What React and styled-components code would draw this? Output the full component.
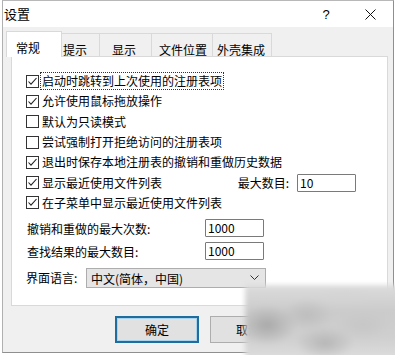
import React from "react";
import styled, { createGlobalStyle } from "styled-components";

const Global = createGlobalStyle`
  html, body { margin: 0; padding: 0; background: #fff; }
  body {
    font-family: "Noto Sans CJK SC", "Noto Sans", sans-serif;
    font-size: 12px;
    color: #000;
  }
`;

const Page = styled.div`
  position: relative;
  width: 395px;
  height: 355px;
  overflow: hidden;
  padding: 0 1px 2px 2px;
  box-sizing: border-box;
  background: #fff;
`;

const Win = styled.div`
  width: 100%;
  height: 100%;
  box-sizing: border-box;
  border: 1px solid #8f8f8f;
  border-top-color: #b8b8b8;
  border-left-color: #b0b0b0;
  background: #f0f0f0;
  display: flex;
  flex-direction: column;
`;

const TitleBar = styled.div`
  height: 26px;
  flex: none;
  background: #fff;
  display: flex;
  align-items: center;
  padding-left: 1px;
  font-size: 13px;
`;

const Title = styled.span`
  flex: 1;
  line-height: 16px;
`;

const Help = styled.span`
  width: 30px;
  text-align: center;
  font-family: "Liberation Sans", sans-serif;
  font-size: 13px;
  margin-right: 7px;
`;

const Close = styled.span`
  width: 45px;
  height: 26px;
  display: flex;
  align-items: center;
  justify-content: center;
`;

const Body = styled.div`
  flex: 1;
  display: flex;
  flex-direction: column;
  padding: 4px 0 0 3px;
`;

const TabRow = styled.div`
  display: flex;
  align-items: flex-end;
  height: 25px;
  position: relative;
  z-index: 1;
`;

const Tab = styled.div`
  box-sizing: border-box;
  width: ${(p) => p.$w}px;
  height: ${(p) => (p.$active ? 26 : 23)}px;
  margin-bottom: ${(p) => (p.$active ? -1 : 0)}px;
  padding-left: ${(p) => p.$pad}px;
  padding-top: 8px;
  line-height: 16px;
  background: ${(p) => (p.$active ? "#fff" : "#f0f0f0")};
  border: 1px solid #d9d9d9;
  border-bottom: none;
  border-left: ${(p) => (p.$first ? "1px solid #d9d9d9" : "none")};
  white-space: nowrap;
`;

const Panel = styled.div`
  margin-left: 5px;
  width: 377px;
  height: 250px;
  box-sizing: border-box;
  border: 1px solid #d9d9d9;
  background: #fff;
  padding: 14px 0 0 14px;
  display: flex;
  flex-direction: column;
`;

const CheckRow = styled.div`
  height: 20.3px;
  display: flex;
  align-items: center;
  padding-right: 31px;
`;

const Box = styled.span`
  width: 13px;
  height: 13px;
  box-sizing: border-box;
  border: 1px solid #333;
  background: #fff;
  flex: none;
  display: flex;
  align-items: center;
  justify-content: center;
  margin-right: 3px;
`;

const Label = styled.span`
  line-height: 16px;
  white-space: nowrap;
  padding: 0 1px;
  margin-left: -1px;
  outline: ${(p) => (p.$focus ? "1px dotted #333" : "none")};
`;

const RightGroup = styled.div`
  margin-left: auto;
  display: flex;
  align-items: center;
  gap: 8px;
`;

const Field = styled.div`
  box-sizing: border-box;
  width: 59px;
  height: 18px;
  border: 1px solid #7a7a7a;
  border-radius: 1px;
  background: #fff;
  padding-left: 2px;
  font-size: 12px;
  line-height: 16px;
`;

const NumRow = styled.div`
  display: grid;
  grid-template-columns: 178px 59px;
  align-items: center;
  height: 18px;
  margin-top: ${(p) => p.$mt}px;
  padding-left: 1px;
`;

const NumLabel = styled.span`
  line-height: 16px;
  padding-top: 3px;
`;

const ComboRow = styled.div`
  display: flex;
  align-items: center;
  height: 20px;
  margin-top: 9px;
`;

const ComboLabel = styled.span`
  width: 60px;
  line-height: 16px;
`;

const Combo = styled.div`
  box-sizing: border-box;
  width: 180px;
  height: 20px;
  border: 1px solid #adadad;
  background: #e5e5e5;
  display: flex;
  align-items: center;
  padding: 0 6px 0 4px;
  justify-content: space-between;
`;

const ButtonRow = styled.div`
  display: flex;
  gap: 11px;
  margin-top: 10px;
  padding-left: 109px;
`;

const Button = styled.div`
  box-sizing: border-box;
  width: ${(p) => p.$w}px;
  height: 27px;
  background: #e1e1e1;
  border: ${(p) => (p.$default ? "2px solid #1e6d9c" : "1px solid #adadad")};
  box-shadow: ${(p) => (p.$default ? "inset 0 0 0 1px #a9d2ec" : "none")};
  display: flex;
  align-items: center;
  justify-content: center;
  line-height: 16px;
`;

const Watermark = styled.div`
  position: absolute;
  left: 245px;
  top: 285px;
  width: 155px;
  height: 75px;
  background:
    radial-gradient(ellipse 30px 20px at 22px 40px, #a9a9a9, rgba(169,169,169,0) 100%),
    radial-gradient(ellipse 26px 16px at 62px 30px, #bdbdbd, rgba(189,189,189,0) 100%),
    radial-gradient(ellipse 30px 16px at 80px 58px, #b6b6b6, rgba(182,182,182,0) 100%),
    radial-gradient(ellipse 28px 14px at 118px 40px, #c6c6c6, rgba(198,198,198,0) 100%),
    radial-gradient(ellipse 34px 10px at 100px 12px, #d4d4d4, rgba(212,212,212,0) 100%),
    linear-gradient(180deg, #dcdcdc 0%, #cbcbcb 35%, #cfcfcf 70%, #dedede 100%);
  filter: blur(2.5px);
`;

const Check = () => (
  <svg width="11" height="11" viewBox="0 0 11 11">
    <path d="M1.5 5.5 L4 8.2 L9.5 2" fill="none" stroke="#222" strokeWidth="1.1" />
  </svg>
);

const CheckItem = ({ checked, focus, children, right }) => (
  <CheckRow>
    <Box>{checked && <Check />}</Box>
    <Label $focus={focus}>{children}</Label>
    {right}
  </CheckRow>
);

export default function App() {
  return (
    <Page>
      <Global />
      <Win>
        <TitleBar>
          <Title>设置</Title>
          <Help>?</Help>
          <Close>
            <svg width="11" height="11" viewBox="0 0 11 11">
              <path d="M0.5 0.5 L10.5 10.5 M10.5 0.5 L0.5 10.5" stroke="#111" strokeWidth="1" />
            </svg>
          </Close>
        </TitleBar>
        <Body>
          <TabRow>
            <Tab $active $first $w={56} $pad={9}>常规</Tab>
            <Tab $w={38} $pad={1}>提示</Tab>
            <Tab $w={52} $pad={12}>显示</Tab>
            <Tab $w={61} $pad={7}>文件位置</Tab>
            <Tab $w={59} $pad={4}>外壳集成</Tab>
          </TabRow>
          <Panel>
            <CheckItem checked focus>启动时跳转到上次使用的注册表项</CheckItem>
            <CheckItem checked>允许使用鼠标拖放操作</CheckItem>
            <CheckItem>默认为只读模式</CheckItem>
            <CheckItem>尝试强制打开拒绝访问的注册表项</CheckItem>
            <CheckItem checked>退出时保存本地注册表的撤销和重做历史数据</CheckItem>
            <CheckItem
              checked
              right={
                <RightGroup>
                  <span>最大数目:</span>
                  <Field>10</Field>
                </RightGroup>
              }
            >
              显示最近使用文件列表
            </CheckItem>
            <CheckItem checked>在子菜单中显示最近使用文件列表</CheckItem>
            <NumRow $mt={5}>
              <NumLabel>撤销和重做的最大次数:</NumLabel>
              <Field>1000</Field>
            </NumRow>
            <NumRow $mt={5}>
              <NumLabel>查找结果的最大数目:</NumLabel>
              <Field>1000</Field>
            </NumRow>
            <ComboRow>
              <ComboLabel>界面语言:</ComboLabel>
              <Combo>
                <span>中文(简体，中国)</span>
                <svg width="9" height="6" viewBox="0 0 9 6">
                  <path d="M0.5 0.5 L4.5 4.5 L8.5 0.5" fill="none" stroke="#333" strokeWidth="1" />
                </svg>
              </Combo>
            </ComboRow>
          </Panel>
          <ButtonRow>
            <Button $default $w={84}>确定</Button>
            <Button $w={76}>取消</Button>
          </ButtonRow>
        </Body>
      </Win>
      <Watermark />
    </Page>
  );
}
